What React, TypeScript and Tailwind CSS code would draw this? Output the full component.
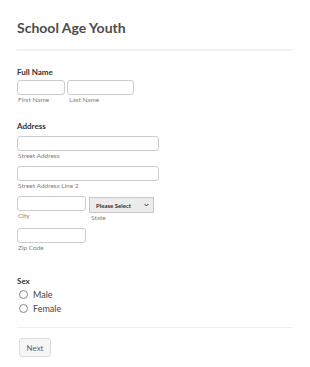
export default function App() {
  return (
    <div className="w-[310px] h-[367px] bg-white font-['Lato',sans-serif] text-[#555] overflow-hidden">
      <div className="px-[17px] pt-[20px]">
        <h1 className="text-[14px] leading-[16px] font-bold text-[#4d4d4d]">School Age Youth</h1>
        <div className="mt-[13px] h-[2px] w-[276px] bg-[#f1f1f1]" />

        <div className="mt-[16px]">
          <div className="text-[8px] leading-[10px] font-bold text-[#333]">Full Name</div>
          <div className="mt-[3px] flex gap-[2px]">
            <div className="flex flex-col">
              <input className="w-[48px] h-[15px] border border-[#ccc] rounded-[3px] bg-white" />
              <span className="mt-[1px] ml-[1px] text-[6.5px] leading-[8px] text-[#808080]">First Name</span>
            </div>
            <div className="flex flex-col">
              <input className="w-[67px] h-[15px] border border-[#ccc] rounded-[3px] bg-white" />
              <span className="mt-[1px] ml-[2px] text-[6.5px] leading-[8px] text-[#808080]">Last Name</span>
            </div>
          </div>
        </div>

        <div className="mt-[17px]">
          <div className="text-[8px] leading-[10px] font-bold text-[#333]">Address</div>
          <input className="mt-[5px] block w-[142px] h-[15px] border border-[#ccc] rounded-[3px] bg-white" />
          <div className="mt-[1px] ml-[1px] text-[6.5px] leading-[8px] text-[#808080]">Street Address</div>
          <input className="mt-[6px] block w-[142px] h-[15px] border border-[#ccc] rounded-[3px] bg-white" />
          <div className="mt-[1px] ml-[1px] text-[6.5px] leading-[8px] text-[#808080]">Street Address Line 2</div>
          <div className="mt-[6px] flex gap-[3px]">
            <div className="flex flex-col">
              <input className="w-[69px] h-[15px] border border-[#ccc] rounded-[3px] bg-white" />
              <span className="mt-[1px] ml-[1px] text-[6.5px] leading-[8px] text-[#808080]">City</span>
            </div>
            <div className="flex flex-col">
              <div className="mt-[1px] w-[65px] h-[16px] border border-[#c8c8c8] bg-[#ececec] flex items-center justify-between pl-[6px] pr-[4px]">
                <span className="text-[6px] font-bold text-[#333]">Please Select</span>
                <svg width="5" height="4" viewBox="0 0 5 4">
                  <path d="M0.6 1 L2.5 3 L4.4 1" stroke="#333" strokeWidth="1" fill="none" />
                </svg>
              </div>
              <span className="mt-[1px] ml-[2px] text-[6.5px] leading-[8px] text-[#808080]">State</span>
            </div>
          </div>
          <input className="mt-[6px] block w-[69px] h-[15px] border border-[#ccc] rounded-[3px] bg-white" />
          <div className="mt-[1px] ml-[1px] text-[6.5px] leading-[8px] text-[#808080]">Zip Code</div>
        </div>

        <div className="mt-[24px]">
          <div className="text-[8px] leading-[10px] font-bold text-[#333]">Sex</div>
          <div className="mt-[3px] flex flex-col gap-[3px]">
            <label className="flex items-center gap-[5px] ml-[2px]">
              <span className="w-[9px] h-[9px] rounded-full border border-[#888] bg-white" />
              <span className="text-[9px] leading-[11px] text-[#444]">Male</span>
            </label>
            <label className="flex items-center gap-[5px] ml-[2px]">
              <span className="w-[9px] h-[9px] rounded-full border border-[#888] bg-white" />
              <span className="text-[9px] leading-[11px] text-[#444]">Female</span>
            </label>
          </div>
        </div>

        <div className="mt-[13px] h-[1px] w-[276px] bg-[#efefef]" />
        <button className="mt-[10px] ml-[2px] w-[32px] h-[19px] border border-[#ddd] rounded-[3px] bg-[#f5f5f5] text-[8px] text-[#666]">
          Next
        </button>
      </div>
    </div>
  )
}
